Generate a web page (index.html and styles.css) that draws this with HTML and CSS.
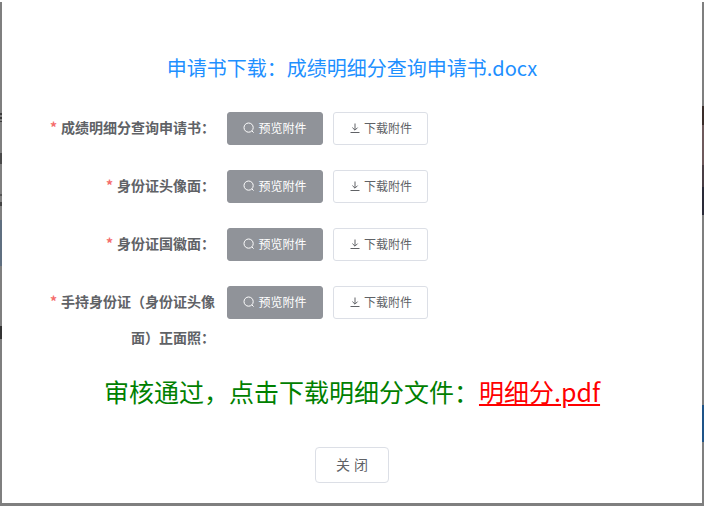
FILE: index.html
```html
<!DOCTYPE html>
<html lang="zh-CN">
<head>
    <meta charset="UTF-8">
    <meta name="viewport" content="width=device-width, initial-scale=1.0">
    <title>申请书下载</title>
    <link rel="stylesheet" href="styles.css">
</head>
<body>
    <div class="backdrop">
        <div class="dialog">
            <h2 class="title">申请书下载&#xFF1A;成绩明细分查询申请书.docx</h2>

            <div class="row">
                <label class="label">成绩明细分查询申请书&#xFF1A;</label>
                <div class="actions">
                    <button class="btn preview">
                        <svg class="icon" viewBox="0 0 12 12"><circle cx="5.6" cy="5.6" r="4.6"/><path d="M8.9 8.9 10.6 10.6"/></svg>
                        预览附件
                    </button>
                    <button class="btn download">
                        <svg class="icon" viewBox="0 0 12 12"><path d="M6 1.5V8M3.4 5.6 6 8.2 8.6 5.6M1.5 10.5H10.5"/></svg>
                        下载附件
                    </button>
                </div>
            </div>

            <div class="row">
                <label class="label">身份证头像面&#xFF1A;</label>
                <div class="actions">
                    <button class="btn preview">
                        <svg class="icon" viewBox="0 0 12 12"><circle cx="5.6" cy="5.6" r="4.6"/><path d="M8.9 8.9 10.6 10.6"/></svg>
                        预览附件
                    </button>
                    <button class="btn download">
                        <svg class="icon" viewBox="0 0 12 12"><path d="M6 1.5V8M3.4 5.6 6 8.2 8.6 5.6M1.5 10.5H10.5"/></svg>
                        下载附件
                    </button>
                </div>
            </div>

            <div class="row">
                <label class="label">身份证国徽面&#xFF1A;</label>
                <div class="actions">
                    <button class="btn preview">
                        <svg class="icon" viewBox="0 0 12 12"><circle cx="5.6" cy="5.6" r="4.6"/><path d="M8.9 8.9 10.6 10.6"/></svg>
                        预览附件
                    </button>
                    <button class="btn download">
                        <svg class="icon" viewBox="0 0 12 12"><path d="M6 1.5V8M3.4 5.6 6 8.2 8.6 5.6M1.5 10.5H10.5"/></svg>
                        下载附件
                    </button>
                </div>
            </div>

            <div class="row">
                <label class="label">手持身份证&#xFF08;身份证头像面&#xFF09;正面照&#xFF1A;</label>
                <div class="actions">
                    <button class="btn preview">
                        <svg class="icon" viewBox="0 0 12 12"><circle cx="5.6" cy="5.6" r="4.6"/><path d="M8.9 8.9 10.6 10.6"/></svg>
                        预览附件
                    </button>
                    <button class="btn download">
                        <svg class="icon" viewBox="0 0 12 12"><path d="M6 1.5V8M3.4 5.6 6 8.2 8.6 5.6M1.5 10.5H10.5"/></svg>
                        下载附件
                    </button>
                </div>
            </div>

            <p class="result">审核通过&#xFF0C;点击下载明细分文件&#xFF1A;<a class="result-link" href="#">明细分.pdf</a></p>

            <div class="footer">
                <button class="btn-close">关 闭</button>
            </div>
        </div>
    </div>
</body>
</html>
```

FILE: styles.css
```css
* {
    box-sizing: border-box;
}

html, body {
    margin: 0;
    padding: 0;
    background-color: #fff;
}

body {
    width: 706px;
    height: 506px;
    overflow: hidden;
    font-family: "Noto Sans CJK SC", "Noto Sans", sans-serif;
}

/* what is left of the page behind the dialog: two 2px strips and the bottom edge */
.backdrop {
    width: 704px;
    height: 506px;
    padding: 0 2px 3px;
    background-color: #7f7f7f;
    background-image:
        linear-gradient(to bottom, #fff 0 2px, #7f7f7f 2px 113px, #3c3c3c 113px 115px, #7f7f7f 115px 117px, #3c3c3c 117px 119px, #7f7f7f 119px 121px, #3c3c3c 121px 122px, #7f7f7f 122px 153px, #4a4a4a 153px 164px, #7f7f7f 164px 194px, #555 194px 196px, #7f7f7f 196px 202px, #444 202px 206px, #7f7f7f 206px 220px, #5f6f80 220px 266px, #7f7f7f 266px 326px, #333 326px 339px, #7f7f7f 339px),
        linear-gradient(to bottom, #fff 0 2px, #7f7f7f 2px 106px, #3a2d2a 106px 125px, #6e5a5c 125px 165px, #4a3f45 165px 187px, #2a2a38 187px 215px, #7f7f7f 215px 405px, #1f5488 405px 442px, #7f7f7f 442px);
    background-size: 2px 100%;
    background-position: left top, right top;
    background-repeat: no-repeat;
}

.dialog {
    height: 100%;
    padding: 54px 0 0 45px;
    background-color: #fff;
}

.title {
    margin: 0 0 28px -45px;
    font-size: 20px;
    font-weight: normal;
    line-height: 28px;
    text-align: center;
    color: #1e90ff;
}

.row {
    display: flex;
    align-items: flex-start;
    margin-bottom: 22px;
}

.label {
    width: 180px;
    margin: -1px 0 1px;
    padding-right: 12px;
    font-size: 14px;
    font-weight: bold;
    line-height: 36px;
    text-align: right;
    color: #606266;
}

.label::before {
    content: "*";
    margin-right: 4px;
    color: #f56c6c;
}

.actions {
    display: flex;
    gap: 10px;
    padding-top: 2px;
}

.btn {
    display: flex;
    align-items: center;
    justify-content: center;
    gap: 3px;
    height: 33px;
    padding: 0 0 2px;
    border-radius: 3px;
    font-family: inherit;
    font-size: 12px;
}

.icon {
    width: 12px;
    height: 12px;
    fill: none;
    stroke: currentColor;
    stroke-width: 1;
}

.preview {
    width: 96px;
    border: 1px solid #909399;
    background-color: #909399;
    color: #fff;
}

.download {
    width: 95px;
    border: 1px solid #dcdfe6;
    background-color: #fff;
    color: #606266;
}

.result {
    margin: -2px 0 41px -45px;
    font-size: 25px;
    line-height: 30px;
    text-align: center;
    color: #008000;
}

.result-link {
    color: #f00;
    text-decoration: underline;
}

.footer {
    display: flex;
    justify-content: center;
    margin-left: -45px;
}

.btn-close {
    width: 74px;
    height: 36px;
    padding: 0 0 2px;
    border: 1px solid #dcdfe6;
    border-radius: 4px;
    background-color: #fff;
    font-family: inherit;
    font-size: 14px;
    word-spacing: 1px;
    color: #606266;
}
```
